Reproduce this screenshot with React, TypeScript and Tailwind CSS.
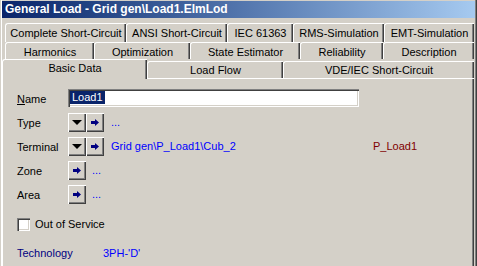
import React from 'react';

const font = { fontFamily: '"Liberation Sans", Arial, sans-serif' };

// tab rows, back to front
const rowOne = [
  { label: 'Complete Short-Circuit', w: 'w-[121px]' },
  { label: 'ANSI Short-Circuit', w: 'w-[101px]' },
  { label: 'IEC 61363', w: 'w-[66px]' },
  { label: 'RMS-Simulation', w: 'w-[91px]' },
  { label: 'EMT-Simulation', w: 'w-[90px]' },
];

const rowTwo = [
  { label: 'Harmonics', w: 'w-[89px]' },
  { label: 'Optimization', w: 'w-[96px]' },
  { label: 'State Estimator', w: 'w-[110px]' },
  { label: 'Reliability', w: 'w-[83px]' },
  { label: 'Description', w: 'w-[91px]' },
];

function Tab({ label, w, h, pt }: { label: string; w: string; h: string; pt: string }) {
  return (
    <div
      className={`${w} ${h} ${pt} shrink-0 rounded-tl-[3px] border-t border-l border-white bg-[#d4d0c8] text-center text-[11px] leading-[13px] text-black shadow-[inset_-1px_0_0_#404040,inset_-2px_0_0_#808080] whitespace-nowrap overflow-hidden`}
    >
      {label}
    </div>
  );
}

function RaisedButton({ children }: { children: React.ReactNode }) {
  return (
    <div className="flex h-[19px] w-[18px] shrink-0 items-center justify-center bg-[#d4d0c8] shadow-[inset_1px_1px_0_#ffffff,inset_-1px_-1px_0_#404040,inset_-2px_-2px_0_#808080]">
      {children}
    </div>
  );
}

function DownTriangle() {
  return (
    <svg width="10" height="5" viewBox="0 0 10 5">
      <polygon points="0,0 10,0 5,5" fill="#000000" />
    </svg>
  );
}

function RightArrow() {
  return (
    <svg width="8" height="7" viewBox="0 0 8 7">
      <polygon points="0,2 4,2 4,0 8,3.5 4,7 4,5 0,5" fill="#000080" />
    </svg>
  );
}

function Row({ label, children }: { label: React.ReactNode; children: React.ReactNode }) {
  return (
    <div className="flex h-[24px] items-start">
      <div className="w-[51px] shrink-0 text-[11px] leading-[20px] text-black">{label}</div>
      {children}
    </div>
  );
}

export default function App() {
  return (
    <div
      style={font}
      className="flex h-[266px] w-[477px] flex-col overflow-hidden bg-[#d4d0c8] shadow-[inset_1px_0_0_#d4d0c8,inset_2px_0_0_#ffffff,inset_-1px_0_0_#404040,inset_-2px_0_0_#808080]"
    >
      {/* Title bar */}
      <div className="mx-[2px] mt-[1px] h-[17px] shrink-0 bg-gradient-to-r from-[#0a246a] to-[#a6caf0] pl-[3px] text-[12px] font-bold leading-[17px] text-white whitespace-nowrap">
        General Load - Grid gen\Load1.ElmLod
      </div>

      {/* Tabs */}
      <div className="mt-[5px] flex pl-[5px]">
        {rowOne.map(t => (
          <Tab key={t.label} label={t.label} w={t.w} h="h-[19px]" pt="pt-[3px]" />
        ))}
      </div>
      <div className="flex pl-[5px]">
        {rowTwo.map(t => (
          <Tab key={t.label} label={t.label} w={t.w} h="h-[17px]" pt="pt-[3px]" />
        ))}
      </div>
      <div className="flex h-[19px] items-end pl-[2px]">
        <div className="relative z-10 mb-[-1px] h-[20px] w-[145px] shrink-0 rounded-tl-[3px] border-t border-l border-white bg-[#d4d0c8] pt-[2px] text-center text-[11px] leading-[13px] text-black shadow-[inset_-1px_0_0_#404040,inset_-2px_0_0_#808080]">
          Basic Data
        </div>
        <Tab label="Load Flow" w="w-[136px]" h="h-[17px]" pt="pt-[2px]" />
        <Tab label="VDE/IEC Short-Circuit" w="w-[191px]" h="h-[17px]" pt="pt-[2px]" />
      </div>

      {/* Page */}
      <div className="ml-[2px] w-[472px] flex-1 border-t border-l border-white pl-[14px] pt-[10px] shadow-[inset_-1px_0_0_#404040,inset_-2px_0_0_#808080]">
        <Row
          label={
            <span>
              <span className="underline">N</span>ame
            </span>
          }
        >
          <div className="flex h-[18px] w-[291px] items-start bg-white p-[2px] shadow-[inset_1px_1px_0_#808080,inset_2px_2px_0_#404040,inset_-1px_-1px_0_#ffffff,inset_-2px_-2px_0_#d4d0c8]">
            <span className="block h-[13px] bg-[#0a246a] pl-[2px] pr-[2px] text-[11px] leading-[13px] text-white">
              Load1
            </span>
          </div>
        </Row>

        <Row label="Type">
          <RaisedButton>
            <DownTriangle />
          </RaisedButton>
          <RaisedButton>
            <RightArrow />
          </RaisedButton>
          <span className="ml-[7px] text-[11px] leading-[18px] text-[#0000ff]">...</span>
        </Row>

        <Row label="Terminal">
          <RaisedButton>
            <DownTriangle />
          </RaisedButton>
          <RaisedButton>
            <RightArrow />
          </RaisedButton>
          <span className="ml-[7px] w-[262px] text-[11px] leading-[18px] text-[#0000ff]">
            Grid gen\P_Load1\Cub_2
          </span>
          <span className="text-[11px] leading-[18px] text-[#800000]">P_Load1</span>
        </Row>

        <Row label="Zone">
          <RaisedButton>
            <RightArrow />
          </RaisedButton>
          <span className="ml-[6px] text-[11px] leading-[18px] text-[#0000ff]">...</span>
        </Row>

        <Row label="Area">
          <RaisedButton>
            <RightArrow />
          </RaisedButton>
          <span className="ml-[6px] text-[11px] leading-[18px] text-[#0000ff]">...</span>
        </Row>

        <div className="mt-[9px] flex h-[13px] items-center">
          <div className="h-[13px] w-[13px] bg-white shadow-[inset_1px_1px_0_#808080,inset_2px_2px_0_#404040,inset_-1px_-1px_0_#ffffff,inset_-2px_-2px_0_#d4d0c8]" />
          <span className="ml-[5px] text-[11px] leading-[13px] text-black">Out of Service</span>
        </div>

        <div className="mt-[16px] flex text-[11px] leading-[13px]">
          <span className="w-[86px] text-[#000080]">Technology</span>
          <span className="text-[#0000ff]">3PH-'D'</span>
        </div>
      </div>
    </div>
  );
}
